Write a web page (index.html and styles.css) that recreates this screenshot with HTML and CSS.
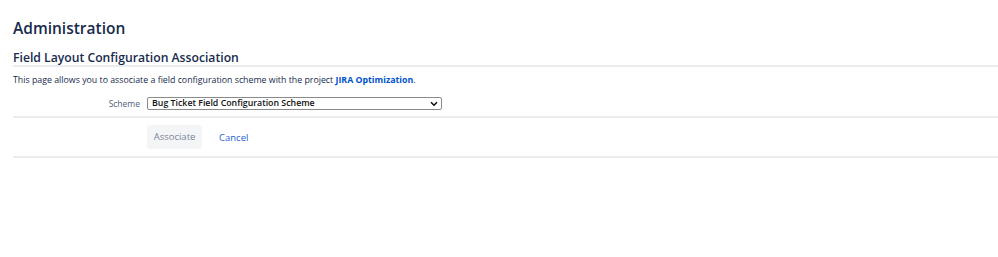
FILE: index.html
```html
<!DOCTYPE html>
<html>
<head>
<meta charset="utf-8">
<link rel="stylesheet" href="styles.css">
</head>
<body>
<div class="page">
  <h1 class="title">Administration</h1>
  <h2 class="subtitle">Field Layout Configuration Association</h2>
  <p class="desc">This page allows you to associate a field configuration scheme with the project <a class="link" href="#">JIRA Optimization</a>.</p>
  <div class="form-row">
    <label class="label" for="scheme">Scheme</label>
    <div class="select">
      <span class="select-text">Bug Ticket Field Configuration Scheme</span>
      <svg class="chev" width="8" height="6" viewBox="0 0 8 6"><path d="M1 1.2 L4 4.2 L7 1.2" fill="none" stroke="#111" stroke-width="1.6"/></svg>
    </div>
  </div>
  <div class="buttons">
    <span class="btn-disabled">Associate</span>
    <a class="cancel" href="#">Cancel</a>
  </div>
</div>
</body>
</html>
```

FILE: styles.css
```css
html, body {
  margin: 0;
  padding: 0;
  background: #fff;
}
body {
  font-family: "Open Sans", "Noto Sans", sans-serif;
  color: #172b4d;
}
.page {
  padding: 17px 0 0 13px;
}
.title {
  margin: 0;
  font-size: 15.5px;
  font-weight: 600;
  line-height: 22px;
  color: #172b4d;
}
.subtitle {
  margin: 12px 0 0 0;
  font-size: 12.2px;
  font-weight: 600;
  line-height: 14px;
  color: #172b4d;
  border-bottom: 2px solid #ebecf0;
}
.desc {
  margin: 6px 0 0 0;
  font-size: 8.8px;
  line-height: 14px;
  color: #172b4d;
}
.link {
  color: #0052cc;
  font-weight: 700;
  text-decoration: none;
}
.form-row {
  display: flex;
  align-items: center;
  margin-top: 10px;
  padding-bottom: 6px;
  border-bottom: 2px solid #ebecf0;
}
.label {
  width: 127px;
  text-align: right;
  padding-right: 7px;
  font-size: 8.5px;
  color: #505f79;
}
.select {
  width: 295px;
  height: 13px;
  border: 1px solid #8a8a8a;
  border-radius: 2px;
  display: flex;
  align-items: center;
  justify-content: space-between;
  padding: 0 1px 0 4px;
  box-sizing: border-box;
}
.select-text {
  font-size: 8.8px;
  font-weight: 600;
  color: #111;
  line-height: 11px;
}
.chev {
  display: block;
  margin-right: 2px;
}
.buttons {
  display: flex;
  align-items: center;
  padding: 7px 0 7px 134px;
  border-bottom: 2px solid #ebecf0;
}
.btn-disabled {
  display: inline-block;
  width: 55px;
  height: 24px;
  line-height: 24px;
  text-align: center;
  background: #f4f5f7;
  color: #7a869a;
  font-size: 9.5px;
  border-radius: 3px;
}
.cancel {
  margin-left: 17px;
  color: #1f5fd0;
  font-size: 9.5px;
  text-decoration: none;
}
```
